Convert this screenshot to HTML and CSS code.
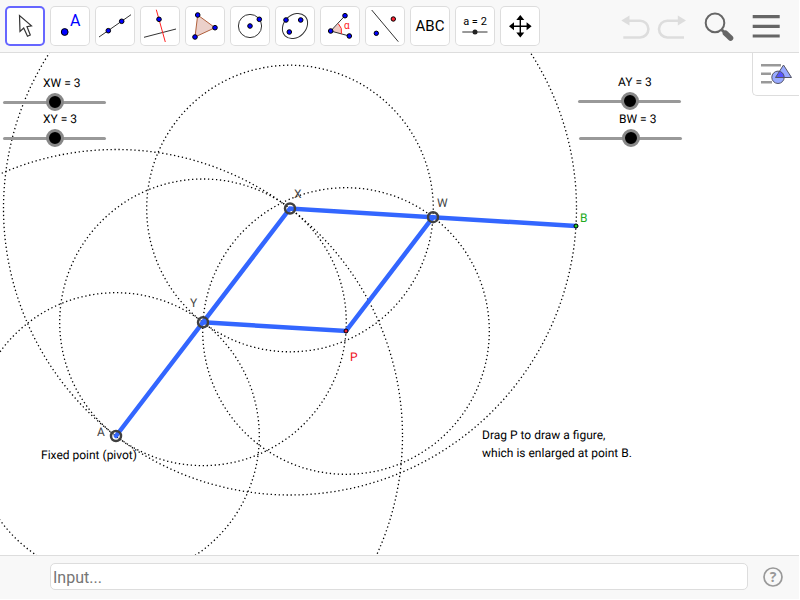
FILE: index.html
```
<!DOCTYPE html>
<html lang="en">
<head>
	<meta charset="UTF-8">
	<title>Pantograph</title>
	<link rel="stylesheet" href="styles.css">
</head>
<body>
	<div class="app">
		<header class="toolbar">
			<div class="tools">
				<button class="tool active" aria-label="Move">
					<svg viewBox="0 0 40 40"><path d="M14.5 9.5L15 25.5L18.7 22L22.5 30.3L25.3 29L22 20.7L26.5 19.8Z" fill="#fff" stroke="#333" stroke-width="1.2"/></svg>
				</button>
				<button class="tool" aria-label="Point">
					<svg viewBox="0 0 40 40"><circle class="dot" cx="14.7" cy="26" r="3.4"/><text class="point-letter" x="20" y="20">A</text></svg>
				</button>
				<button class="tool" aria-label="Line">
					<svg viewBox="0 0 40 40"><path class="thin" d="M4 31L36 8.7"/><circle class="dot" cx="13.3" cy="24.7" r="2.3"/><circle class="dot" cx="26.7" cy="15.3" r="2.3"/></svg>
				</button>
				<button class="tool" aria-label="Perpendicular line">
					<svg viewBox="0 0 40 40"><path class="thin" d="M4 31.3L36 23"/><path class="thin red" d="M16.3 3.7L25.3 36"/><circle class="dot" cx="19" cy="13.3" r="2.3"/></svg>
				</button>
				<button class="tool" aria-label="Polygon">
					<svg viewBox="0 0 40 40"><path d="M12.7 9L30 21.7L10 31Z" fill="#ebd0ca" stroke="#b0603c"/><circle class="dot" cx="12.7" cy="9" r="2.3"/><circle class="dot" cx="30" cy="21.7" r="2.3"/><circle class="dot" cx="10" cy="31" r="2.3"/></svg>
				</button>
				<button class="tool" aria-label="Circle">
					<svg viewBox="0 0 40 40"><circle class="thin" cx="20" cy="20" r="11.6"/><circle class="dot" cx="20" cy="20" r="2.3"/><circle class="dot" cx="29.3" cy="13.3" r="2.3"/></svg>
				</button>
				<button class="tool" aria-label="Ellipse">
					<svg viewBox="0 0 40 40"><ellipse class="thin" cx="20" cy="20" rx="14" ry="11" transform="rotate(-45 20 20)"/><circle class="dot" cx="11" cy="14" r="2.3"/><circle class="dot" cx="25.7" cy="14" r="2.3"/><circle class="dot" cx="14.3" cy="26" r="2.3"/></svg>
				</button>
				<button class="tool" aria-label="Angle">
					<svg viewBox="0 0 40 40"><path d="M10.7 25L18.3 17.7A11 11 0 0 1 21.4 28Z" fill="#f0cbc5"/><path class="thin" d="M25 9.7L10.7 25L29.3 30"/><path class="thin red" d="M18.3 17.7A11 11 0 0 1 21.4 28"/><circle class="dot" cx="10.7" cy="25" r="2.3"/><circle class="dot" cx="25" cy="9.7" r="2.3"/><circle class="dot" cx="29.3" cy="30" r="2.3"/><text class="alpha" x="24" y="23">α</text></svg>
				</button>
				<button class="tool" aria-label="Reflect">
					<svg viewBox="0 0 40 40"><path class="thin" d="M6.7 4L33.3 35.7"/><circle class="dot red-dot" cx="28.3" cy="13" r="2.2"/><circle class="dot" cx="11.3" cy="27.3" r="2.2"/></svg>
				</button>
				<button class="tool" aria-label="Text">
					<svg viewBox="0 0 40 40"><text class="abc" x="20" y="25">ABC</text></svg>
				</button>
				<button class="tool" aria-label="Slider">
					<svg viewBox="0 0 40 40"><text class="a-two" x="20" y="19">a = 2</text><path class="thin" d="M7.3 26H32.5"/><circle cx="20" cy="26" r="2.5" fill="#222"/></svg>
				</button>
				<button class="tool" aria-label="Move view">
					<svg viewBox="0 0 40 40"><path d="M12 20.3H29M20.3 12V29" stroke="#000" stroke-width="1.4"/><path d="M20.3 9L24.3 14H16.3ZM20.3 31.6L24.3 26.6H16.3ZM9 20.3L14 16.3V24.3ZM31.6 20.3L26.6 16.3V24.3Z"/></svg>
				</button>
			</div>
			<div class="actions">
				<div class="history">
					<button class="action" aria-label="Undo">
						<svg viewBox="0 0 32 32"><path d="M9 10.7H21A8.4 8.4 0 0 1 21 27.5H4.3" fill="none" stroke="#ddd" stroke-width="2.6"/><path d="M2.3 10.5L10.5 5.5V15.5Z" fill="#ddd"/></svg>
					</button>
					<button class="action" aria-label="Redo">
						<svg viewBox="0 0 32 32"><path d="M22 10.7H10.4A8.4 8.4 0 0 0 10.4 27.5H27" fill="none" stroke="#ddd" stroke-width="2.6"/><path d="M29 10.5L20.8 5.5V15.5Z" fill="#ddd"/></svg>
					</button>
				</div>
				<button class="action" aria-label="Search">
					<svg viewBox="0 0 32 32"><circle cx="12" cy="12.9" r="9.3" fill="none" stroke="#666" stroke-width="2"/><path d="M18.7 19.8L22.5 23.5" stroke="#666" stroke-width="3"/><path d="M22.5 23.3L27.5 28" stroke="#666" stroke-width="5.6" stroke-linecap="round"/></svg>
				</button>
				<button class="action" aria-label="Menu">
					<svg viewBox="0 0 32 32"><path d="M3.7 6.7H30.7M3.7 16.4H30.7M3.7 26H30.7" stroke="#666" stroke-width="3.2"/></svg>
				</button>
			</div>
		</header>

		<main class="view">
			<svg class="drawing">
				<g class="locus">
					<circle cx="116" cy="383" r="143.3"/>
					<circle cx="203" cy="269.3" r="143.3"/>
					<circle cx="290" cy="155.5" r="143.3"/>
					<circle cx="346" cy="278" r="143.3"/>
					<circle cx="116" cy="383" r="286.5"/>
					<circle cx="290" cy="155.5" r="286.5"/>
				</g>
				<g class="bars">
					<path d="M116 383L290 155.5L576 173"/>
					<path d="M203 269.3L346 278L433 164.2"/>
				</g>
				<g class="joints">
					<circle cx="116" cy="383" r="5"/>
					<circle cx="203" cy="269.3" r="5"/>
					<circle cx="290" cy="155.5" r="5"/>
					<circle cx="433" cy="164.2" r="5"/>
				</g>
				<circle class="end p" cx="346" cy="278" r="2"/>
				<circle class="end b" cx="576" cy="173" r="2"/>
				<text class="name" x="97" y="383">A</text>
				<text class="name" x="190" y="254">Y</text>
				<text class="name" x="294" y="145">X</text>
				<text class="name" x="437" y="154">W</text>
				<text class="name name-b" x="580" y="169">B</text>
				<text class="name name-p" x="350" y="308">P</text>
				<text x="41" y="406">Fixed point (pivot)</text>
				<text x="482" y="386">Drag P to draw a figure,</text>
				<text x="482" y="404">which is enlarged at point B.</text>
			</svg>

			<div class="slider xw">
				<label for="xw">XW = 3</label>
				<input type="range" id="xw" min="1" max="5" value="3">
			</div>
			<div class="slider xy">
				<label for="xy">XY = 3</label>
				<input type="range" id="xy" min="1" max="5" value="3">
			</div>
			<div class="slider ay">
				<label for="ay">AY = 3</label>
				<input type="range" id="ay" min="1" max="5" value="3">
			</div>
			<div class="slider bw">
				<label for="bw">BW = 3</label>
				<input type="range" id="bw" min="1" max="5" value="3">
			</div>

			<button class="stylebar" aria-label="Style bar">
				<svg viewBox="0 0 46 42"><path d="M8 12.3H28M8 20.7H18M8 29.3H19" stroke="#999" stroke-width="2.4"/><circle cx="25" cy="24.3" r="6.2" fill="#9af"/><path d="M30.5 12L38.5 24.5H22.5Z" fill="#9af"/><path d="M26.8 18.3A6.2 6.2 0 0 1 31.2 24.5H22.5Z" fill="#55f"/><circle cx="25" cy="24.3" r="6.2" fill="none" stroke="#556"/><path d="M30.5 12L38.5 24.5H22.5Z" fill="none" stroke="#556"/></svg>
			</button>
		</main>

		<footer class="inputbar">
			<input type="text" class="command" placeholder="Input..." aria-label="Input">
			<button class="help" aria-label="Help">
				<svg viewBox="0 0 20 20"><circle cx="10" cy="10" r="9" fill="none" stroke="#999" stroke-width="1.7"/><text x="10" y="15">?</text></svg>
			</button>
		</footer>
	</div>
</body>
</html>
```
FILE: styles.css
```
*{
	margin: 0;
	padding: 0;
	box-sizing: border-box;
}
body{
	padding: 0 1px 1px 0;
	height: 100vh;
	font-family: Roboto, sans-serif;
	font-size: 12px;
	color: #000;
	background: #fff;
	text-rendering: geometricPrecision;
}
button{
	border: 0;
	background: none;
	cursor: pointer;
}
svg{
	display: block;
}
.app{
	display: flex;
	flex-direction: column;
	height: 100%;
}

/* toolbar */
.toolbar{
	display: flex;
	justify-content: space-between;
	align-items: center;
	padding: 6px 18px 6px 5px;
	background: #f8f8f8;
	border-bottom: 1px solid #ddd;
}
.tools{
	display: flex;
	gap: 5px;
}
.tool{
	width: 40px;
	height: 40px;
	border-radius: 5px;
	background: #fff;
	box-shadow: inset 0 0 0 1px #ddd;
}
.tool.active{
	box-shadow: inset 0 0 0 2px #66f;
}
.tool svg{
	width: 40px;
	height: 40px;
}
.tool text{
	font-family: Roboto, sans-serif;
}
.thin{
	fill: none;
	stroke: #333;
}
.thin.red{
	stroke: #f22;
}
.dot{
	fill: #00f;
	stroke: #000;
	stroke-width: 1;
}
.red-dot{
	fill: #f23;
}
.point-letter{
	font-size: 16px;
	fill: #00f;
}
.alpha{
	font-size: 10px;
	fill: #f22;
}
.abc{
	font-size: 15px;
	text-anchor: middle;
}
.a-two{
	font-size: 11px;
	text-anchor: middle;
}
.actions{
	display: flex;
	gap: 14px;
}
.history{
	display: flex;
	gap: 6px;
}
.action, .action svg{
	width: 32px;
	height: 32px;
}

/* graphics view */
.view{
	flex: 1;
	position: relative;
	overflow: hidden;
}
.drawing{
	position: absolute;
	width: 100%;
	height: 100%;
}
.locus{
	fill: none;
	stroke: #000;
	stroke-width: 1.3;
	stroke-dasharray: 1.3 2.7;
}
.bars{
	fill: none;
	stroke: #36f;
	stroke-width: 4.5;
	stroke-linecap: round;
}
.joints{
	fill: none;
	stroke: #404040;
	stroke-width: 2.5;
}
.end{
	stroke: #000;
	stroke-width: 1;
}
.p{
	fill: #e23;
}
.b{
	fill: #2c2;
}
.name{
	fill: #444;
}
.name-b{
	fill: #2a2;
}
.name-p{
	fill: #e12;
}
.slider{
	position: absolute;
	width: 103px;
}
.slider label{
	display: block;
	padding-left: 40px;
	line-height: 14px;
}
.slider input{
	display: block;
	width: 100%;
	height: 18px;
	margin-top: 3px;
	background: none;
	appearance: none;
	-webkit-appearance: none;
}
.slider input::-webkit-slider-runnable-track{
	height: 3px;
	border-radius: 2px;
	background: #999;
}
.slider input::-webkit-slider-thumb{
	-webkit-appearance: none;
	width: 18px;
	height: 18px;
	margin-top: -8px;
	border: 3px solid #888;
	border-radius: 50%;
	background: #000;
}
.xw{
	left: 3px;
	top: 23px;
}
.xy{
	left: 3px;
	top: 59px;
}
.ay{
	left: 578px;
	top: 22px;
}
.bw{
	left: 579px;
	top: 59px;
}
.stylebar{
	position: absolute;
	top: 0;
	right: 0;
	border: 1px solid #ddd;
	border-width: 0 0 1px 1px;
	border-radius: 0 0 0 5px;
	background: #fff;
}
.stylebar svg{
	width: 46px;
	height: 42px;
}

/* input bar */
.inputbar{
	display: flex;
	align-items: center;
	gap: 15px;
	padding: 7px 16px 9px 50px;
	background: #f8f8f8;
	border-top: 1px solid #ddd;
}
.command{
	flex: 1;
	height: 27px;
	padding: 2px 2px 0;
	border: 1px solid #ddd;
	border-radius: 5px;
	font-family: Roboto, sans-serif;
	font-size: 16px;
	background: #fff;
}
.command::placeholder{
	color: #757575;
}
.help, .help svg{
	width: 20px;
	height: 20px;
}
.help text{
	font-family: "Open Sans", sans-serif;
	font-size: 14px;
	font-weight: bold;
	text-anchor: middle;
	fill: #999;
}
```
